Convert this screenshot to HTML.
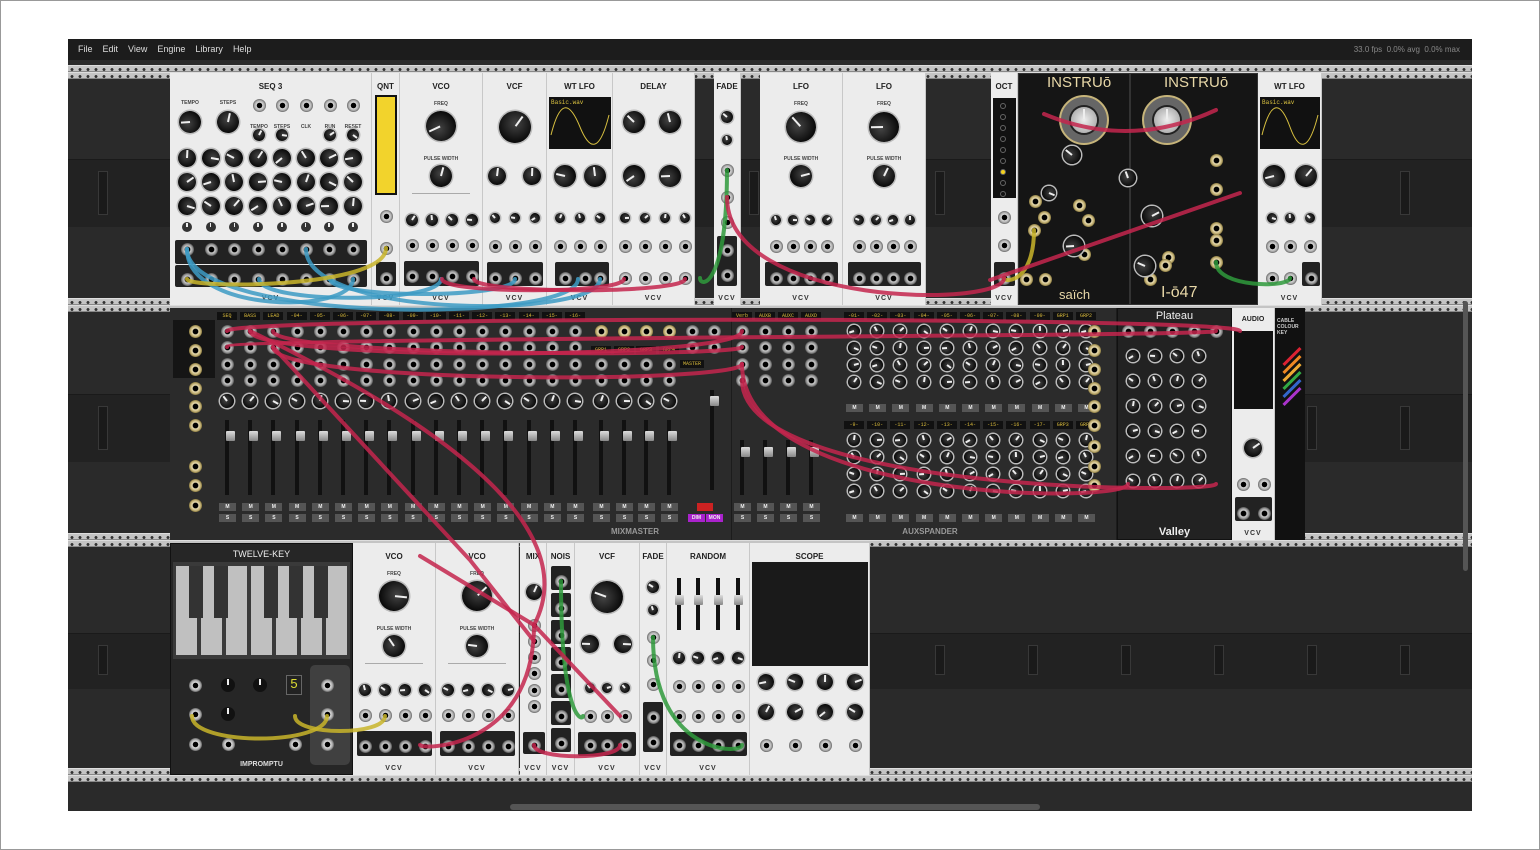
<!DOCTYPE html>
<html><head><meta charset="utf-8"><style>
*{margin:0;padding:0;box-sizing:border-box}
body{width:1540px;height:850px;background:#fff;position:relative;overflow:hidden;font-family:"Liberation Sans",sans-serif}
#frame{position:absolute;left:0;top:0;width:1540px;height:850px;border:1px solid #999}
#app{position:absolute;left:68px;top:39px;width:1404px;height:772px;background:#2a2a2a;overflow:hidden}
#menu{position:absolute;left:0;top:0;width:1404px;height:21px;background:#1c1c1c;color:#ddd;font-size:9px;line-height:21px}
#menu span{margin-left:10px}
#menu .r{position:absolute;right:12px;top:0;color:#888;font-size:8px}
.rail{position:absolute;left:0;width:1404px;height:7px;background:#c4c4c4;background-image:radial-gradient(circle,#333 1.3px,transparent 1.6px);background-size:8px 7px;border-top:1px solid #ddd;border-bottom:1px solid #888}
.band{position:absolute;left:0;width:1404px;background:#222;border-top:1px solid #1a1a1a}
.conn{position:absolute;width:10px;height:40px;background:#1a1a1a;border:1px solid #383838}
.p{position:absolute;overflow:hidden}
.w{background:#ececec;border-right:1px solid #c8c8c8}
.d{background:#2b2b2b;border-right:1px solid #1c1c1c}
.t{position:absolute;left:0;width:100%;text-align:center;font-weight:bold;font-size:8px;color:#222}
.l{position:absolute;font-size:5px;color:#444;font-weight:bold;transform:translateX(-50%);white-space:nowrap}
.dl{color:#bbb}
.k{position:absolute;border-radius:50%;background:radial-gradient(circle at 45% 40%,#444,#0c0c0c 70%);box-shadow:0 0 0 1.5px #bbb}
.k::after{content:"";position:absolute;left:50%;top:8%;width:1.5px;height:40%;background:#eee;margin-left:-.75px}
.j{position:absolute;width:13px;height:13px;border-radius:50%;background:radial-gradient(circle,#000 2.5px,#ddd 3px,#aaa 5px,#666 6.5px)}
.jd{background:radial-gradient(circle,#000 2.5px,#ccc 3.2px,#999 5px,#555 6.5px)}
.jg{background:radial-gradient(circle,#000 2.5px,#e8dcb0 3.2px,#c6b47a 5px,#8a7a40 6.5px)}
.ob{position:absolute;background:#222;border-radius:2px}
.vcv{position:absolute;bottom:3px;left:0;width:100%;text-align:center;font-size:7px;font-weight:bold;color:#333;letter-spacing:1px}
.lab{position:absolute;background:#111;color:#d8b93a;font-size:5px;font-family:"Liberation Mono",monospace;text-align:center;height:8px;line-height:8px;width:20px}
.fad{position:absolute;width:4px;height:75px;background:#111}
.cap{position:absolute;width:9px;height:10px;background:linear-gradient(#ddd,#888);border-radius:1px}
.btn{position:absolute;width:17px;height:8px;background:#555;color:#eee;font-size:5px;text-align:center;line-height:8px;font-weight:bold}
</style></head><body><div id="frame"></div>
<div id="app">
<div id="menu"><span>File</span><span>Edit</span><span>View</span><span>Engine</span><span>Library</span><span>Help</span><span class="r">33.0 fps &nbsp;0.0% avg &nbsp;0.0% max</span></div>
<div class="rail" style="top:26px"></div><div class="rail" style="top:33px"></div>
<div class="band" style="top:120px;height:68px"></div>
<div class="rail" style="top:259px"></div><div class="rail" style="top:266px"></div>
<div class="band" style="top:355px;height:68px"></div>
<div class="rail" style="top:494px"></div><div class="rail" style="top:501px"></div>
<div class="band" style="top:594px;height:56px"></div>
<div class="rail" style="top:729px"></div><div class="rail" style="top:736px"></div>
<div style="position:absolute;left:442px;top:765px;width:530px;height:6px;background:#555;border-radius:3px"></div>
<div style="position:absolute;left:1395px;top:262px;width:5px;height:270px;background:#555;border-radius:3px"></div>
<div id="mods"></div>
<svg id="cab" width="1404" height="772" style="position:absolute;left:0;top:0" fill="none" stroke-linecap="round"></svg>
</div>
<script>
var M=document.getElementById('mods');
function el(cls,x,y,w,h,st,html){var d=document.createElement('div');d.className=cls;d.style.left=x+'px';d.style.top=y+'px';if(w)d.style.width=w+'px';if(h)d.style.height=h+'px';if(st)d.style.cssText+=st;if(html)d.innerHTML=html;M.appendChild(d);return d}
var OX=68,OY=39;
[120,355,594].forEach(function(b){for(var x=0;x<1404;x+=93)el('conn',x+30,b+12,10,b==594?30:44);});
function P(x,y,w,h,c,title,vcv){el('p '+c,x-OX,y-OY,w,h,'',(title?'<div class="t" style="top:9px;'+(c=='d'?'color:#ddd':'')+'">'+title+'</div>':'')+(vcv?'<div class="vcv">VCV</div>':''))}
function K(x,y,r){el('k',x-OX-r,y-OY-r,2*r,2*r,'transform:rotate('+((x*37+y*13)%260-130)+'deg)')}
function J(x,y,t){el('j '+(t||''),x-OX-6,y-OY-6)}
function L(x,y,s,d){el('l'+(d?' dl':''),x-OX,y-OY,0,0,'',s)}
function OB(x,y,w,h){el('ob',x-OX,y-OY,w,h)}
P(170,73,202,232,'w','SEQ 3',1);
L(190,100,'TEMPO');L(228,100,'STEPS');K(190,122,11);K(228,122,11);
[259,282,306,330,353].forEach(function(x,i){J(x,105);L(x,124,['TEMPO','STEPS','CLK','RUN','RESET'][i]);});
K(259,135,6);K(282,135,6);K(330,135,6);K(353,135,6);
for(var r=0;r<3;r++)for(var q=0;q<8;q++)K(187+q*23.7,158+r*24,9);
for(var q=0;q<8;q++){el('k',187+q*23.7-OX-5,227-OY-5,10,10,'box-shadow:none;background:#333');}
OB(175,240,192,24);for(var q=0;q<8;q++)J(187+q*23.7,249,'jd');
OB(175,265,192,22);for(var q=0;q<8;q++)J(187+q*23.7,279,'jd');
P(372,73,28,232,'w','QNT',1);el('p',375-OX,95-OY,22,100,'background:#f2d32c;border:2px solid #111');
J(386,216);J(386,248);OB(376,262,20,24);J(386,278,'jd');
function vco(x,y){P(x,y,83,232,'w','VCO',1);L(x+41,y+28,'FREQ');K(x+41,y+53,15);L(x+41,y+83,'PULSE WIDTH');K(x+41,y+103,11);
el('p',x+12-OX,y+120-OY,58,1,'background:#aaa');[10,30,50,70].forEach(function(d){K(x+d+2,y+147,6);J(x+d+2,y+172);});OB(x+4,y+188,75,25);[10,30,50,70].forEach(function(d){J(x+d+2,y+203,'jd')});}
vco(400,73);
function vcf(x,y,w,t){P(x,y,w,232,'w',t,1);}
vcf(483,73,64,'VCF');K(515,127,16);K(497,176,9);K(532,176,9);[495,515,535].forEach(function(a){K(a,218,5);J(a,246);});OB(487,262,56,24);[495,515,535].forEach(function(a){J(a,278,'jd')});
vcf(547,73,66,'WT LFO');el('p',549-OX,97-OY,62,52,'background:#111','<div style="color:#d8c040;font:6px Liberation Mono;padding:2px">Basic.wav</div><svg width="62" height="44" style="position:absolute;top:8px"><path d="M2 30 C12 -10 22 0 31 22 S50 50 60 10" stroke="#d8c040" fill="none"/></svg>');K(565,176,11);K(595,176,11);[560,580,600].forEach(function(a){K(a,218,5);J(a,246);});OB(555,262,54,24);[565,585,600].forEach(function(a){J(a,278,'jd')});
vcf(613,73,82,'DELAY');K(634,122,11);K(670,122,11);K(634,176,11);K(670,176,11);[625,645,665,685].forEach(function(a){K(a,218,5);J(a,246);J(a,278);});
P(714,73,27,232,'w','FADE',1);K(727,117,6);K(727,140,5);J(727,170);J(727,197);J(727,222);OB(717,236,20,50);J(727,250,'jd');J(727,275,'jd');
function lfo(x){P(x,73,83,232,'w','LFO',1);L(x+41,101,'FREQ');K(x+41,127,15);L(x+41,156,'PULSE WIDTH');K(x+41,176,11);[16,33,50,67].forEach(function(d){K(x+d,220,5);J(x+d,246);});OB(x+5,262,73,24);[16,33,50,67].forEach(function(d){J(x+d,278,'jd')});}
lfo(760);lfo(843);
P(991,73,27,232,'w','OCT',1);el('p',993-OX,98-OY,23,100,'background:#111');for(var i=0;i<9;i++)el('p',1000-OX,103+i*11-OY,6,6,'border-radius:50%;border:1px solid #666;'+(i==6?'background:#f5d21e':''));J(1004,217);J(1004,245);OB(994,262,21,24);J(1004,278,'jd');
el('p',1018-OX,73-OY,112,232,'background:#151515;border:1px solid #333','<div style="position:absolute;top:0;left:28px;color:#e8d8a8;font-size:15px">INSTRUō</div><div style="position:absolute;bottom:2px;left:40px;color:#e8d8a8;font-size:13px">saïch</div>');
el('p',1130-OX,73-OY,128,232,'background:#151515;border:1px solid #333','<div style="position:absolute;top:0;left:33px;color:#e8d8a8;font-size:15px">INSTRUō</div><div style="position:absolute;bottom:2px;left:30px;color:#e8d8a8;font-size:16px">I-ō47</div>');
function big(x,y){el('p',x-OX-25,y-OY-25,50,50,'border-radius:50%;background:#666;border:2px solid #c6b47a');el('k',x-OX-13,y-OY-13,26,26,'background:radial-gradient(circle,#eee,#999);box-shadow:0 0 0 2px #222');}
big(1084,120);big(1167,120);
[[1035,201],[1044,217],[1034,230],[1079,205],[1084,254],[1168,257],[1216,160],[1216,189],[1216,228],[1216,240],[1216,262],[1088,220],[1045,279],[1026,279],[1150,279],[1165,265]].forEach(function(p){J(p[0],p[1],'jg')});
K(1074,246,10);K(1152,216,10);K(1145,266,10);K(1128,178,8);K(1049,193,7);K(1072,155,9);
P(1258,73,64,232,'w','WT LFO',1);el('p',1260-OX,97-OY,60,52,'background:#111','<div style="color:#d8c040;font:6px Liberation Mono;padding:2px">Basic.wav</div><svg width="60" height="44" style="position:absolute;top:8px"><path d="M2 30 C12 -10 22 0 30 22 S48 50 58 10" stroke="#d8c040" fill="none"/></svg>');K(1274,176,11);K(1306,176,11);[1272,1290,1310].forEach(function(a){K(a,218,5);J(a,246);});OB(1302,262,18,24);J(1272,278);J(1290,278);J(1311,278,'jd');
P(170,308,562,232,'d','',0);P(732,308,385,232,'d','',0);
el('p',1117-OX,308-OY,115,232,'background:#222;border:1px solid #111','<div style="position:absolute;top:1px;width:100%;text-align:center;color:#eee;font-size:11px">Plateau</div><div style="position:absolute;bottom:1px;width:100%;text-align:center;color:#eee;font-size:11px;font-weight:bold">Valley</div>');
P(1232,308,43,232,'w','',1);el('l',1253-OX,316-OY,0,0,'font-size:7px;color:#222','AUDIO');el('p',1234-OX,331-OY,39,78,'background:#111');K(1253,448,9);J(1243,484);J(1264,484);OB(1235,497,37,24);J(1243,513,'jd');J(1264,513,'jd');
el('p',1275-OX,308-OY,30,232,'background:#111','<div style="color:#ccc;font-size:5px;font-weight:bold;padding:10px 2px">CABLE COLOUR KEY</div>');
['#d23','#e82','#ea3','#3a4','#36c','#a3c'].forEach(function(cc,i){el('p',1280-OX,355+i*8-OY,24,3,'background:'+cc+';transform:rotate(-45deg)')});
var names=['SEQ','BASS','LEAD','-04-','-05-','-06-','-07-','-08-','-09-','-10-','-11-','-12-','-13-','-14-','-15-','-16-'];
for(var q=0;q<16;q++){var x=227+q*23.2;el('lab',x-OX-10,312-OY,20,0,'',names[q]);[331,347,364,380].forEach(function(y){J(x,y,'jd')});K(x,401,7);el('fad',x-OX-2,420-OY);el('cap',x-OX-1,431-OY);el('btn',x-OX-8,503-OY,0,0,'','M');el('btn',x-OX-8,514-OY,0,0,'','S');}
el('p',173-OX,320-OY,42,58,'background:#151515');
[331,350,369,388,406,425,466,485,505].forEach(function(y){J(195,y,'jg')});
[601,624,646,669].forEach(function(x,i){J(x,331,'jg');el('lab',x-OX-10,346-OY,20,0,'',['GRP1','GRP2','GRP3','GRP4'][i]);J(x,364,'jd');J(x,380,'jd');K(x,401,7);el('fad',x-OX-2,420-OY);el('cap',x-OX-1,431-OY);el('btn',x-OX-8,503-OY,0,0,'','M');el('btn',x-OX-8,514-OY,0,0,'','S');});
J(692,331,'jd');J(692,347,'jd');J(714,331,'jd');J(714,347,'jd');el('lab',692-OX-12,360-OY,24,0,'','MASTER');el('fad',712-OX-2,390-OY,0,100);el('cap',710-OX,396-OY);el('btn',697-OX,503-OY,16,0,'background:#c22');el('btn',688-OX,514-OY,0,0,'background:#a2c','DIM');el('btn',706-OX,514-OY,0,0,'background:#a2c','MON');
el('l',635-OX,527-OY,0,0,'font-size:8px;color:#999','MIXMASTER');el('l',930-OX,527-OY,0,0,'font-size:8px;color:#999','AUXSPANDER');
['Verb','AUXB','AUXC','AUXD'].forEach(function(n,i){var x=742+i*23;el('lab',x-OX-10,312-OY,20,0,'',n);[331,347,364,380].forEach(function(y){J(x,y,'jd')});el('fad',x-OX-2,440-OY,0,55);el('cap',x-OX-1,447-OY);el('btn',x-OX-8,503-OY,0,0,'','M');el('btn',x-OX-8,514-OY,0,0,'','S');});
for(var q=0;q<11;q++){var x=854+q*23.2;el('lab',x-OX-10,312-OY,20,0,'',q<9?'-0'+(q+1)+'-':'GRP'+(q-8));el('lab',x-OX-10,421-OY,20,0,'',q<9?'-'+(q+9)+'-':'GRP'+(q-6));for(var r=0;r<4;r++){K(x,331+r*17,6);K(x,440+r*17,6);}el('btn',x-OX-8,404-OY,0,0,'','M');el('btn',x-OX-8,514-OY,0,0,'','M');}
[331,350,369,388,406,425,446,466,485].forEach(function(y){J(1094,y,'jg')});
for(var r=0;r<6;r++)for(var q=0;q<4;q++)K(1133+q*22,356+r*25,6);
[1128,1150,1172,1194,1216].forEach(function(x){J(x,331,'jd')});
el('p',170-OX,543-OY,183,232,'background:#262626;border:1px solid #111','<div style="position:absolute;top:5px;width:100%;text-align:center;color:#eee;font-size:9px">TWELVE-KEY</div><div style="position:absolute;bottom:6px;width:100%;text-align:center;color:#ddd;font-size:7px;font-weight:bold">IMPROMPTU</div>');
el('p',173-OX,562-OY,177,97,'background:#3a3a3a');
for(var i=0;i<7;i++)el('p',176+i*25-OX,566-OY,21,89,'background:#c0c0c0');
[0,1,3,4,5].forEach(function(i){el('p',189+i*25-OX,566-OY,14,52,'background:#333')});
el('p',310-OX,665-OY,40,100,'background:#404040;border-radius:5px');
[[195,685],[195,714],[195,744],[228,744],[295,685],[327,744],[295,744],[327,685],[327,714]].forEach(function(p){J(p[0],p[1])});
el('k',221-OX,678-OY,14,14,'box-shadow:none;background:#111');el('k',253-OX,678-OY,14,14,'box-shadow:none;background:#111');el('k',221-OX,707-OY,14,14,'box-shadow:none;background:#111');
el('p',286-OX,675-OY,16,20,'background:#222;border:1px solid #666;color:#dd3;font-size:13px;text-align:center','5');
vco(353,543);vco(436,543);
P(520,543,27,232,'w','MIX',1);K(534,592,8);[625,641,657,673,690,706].forEach(function(y){J(534,y)});OB(523,732,22,22);J(534,745,'jd');
P(547,543,28,232,'w','NOIS',1);for(var i=0;i<7;i++){OB(551,566+i*27,20,24);J(561,581+i*27,'jd');}
vcf(575,543,65,'VCF');K(607,597,16);K(590,644,9);K(623,644,9);[590,607,625].forEach(function(a){K(a,688,5);J(a,716);});OB(578,732,58,24);[590,607,625].forEach(function(a){J(a,745,'jd')});
P(640,543,27,232,'w','FADE',1);K(653,587,6);K(653,610,5);J(653,637);J(653,660);J(653,684);OB(643,702,20,50);J(653,717,'jd');J(653,742,'jd');
P(667,543,83,232,'w','RANDOM',1);[679,698,718,738].forEach(function(x){el('p',x-OX-2,578-OY,4,52,'background:#111');el('cap',x-OX-4,595-OY);K(x,658,6);J(x,686);J(x,716);});OB(670,732,77,24);[679,698,718,738].forEach(function(x){J(x,745,'jd')});
P(750,543,120,232,'w','SCOPE',0);el('p',752-OX,562-OY,116,104,'background:#1a1a1a');[766,795,825,855].forEach(function(x){K(x,682,8);K(x,712,8);J(x,745);});
var S=document.getElementById('cab');
function C(d,col){var p=document.createElementNS('http://www.w3.org/2000/svg','path');p.setAttribute('d',d);p.setAttribute('stroke',col);p.setAttribute('stroke-width','4');p.setAttribute('stroke-opacity','0.85');S.appendChild(p);}
var R='#c4264d',B='#3d9bc4',Y='#c9b52a',G='#2f9a3c';
function cb(x1,y1,x2,y2,col,sag){x1-=OX;x2-=OX;y1-=OY;y2-=OY;var my=Math.max(y1,y2)+(sag||30);C('M'+x1+' '+y1+' C'+x1+' '+my+' '+x2+' '+my+' '+x2+' '+y2,col);}
cb(187,249,353,279,B,35);cb(187,249,578,279,B,45);cb(259,279,441,279,B,25);cb(330,279,515,279,B,20);cb(306,249,600,279,B,40);
cb(187,279,386,248,Y,10);cb(1004,278,1034,230,Y,5);cb(295,716,385,716,Y,20);cb(192,716,327,716,Y,30);
cb(727,170,700,278,G,10);cb(1216,262,1290,278,G,10);cb(561,581,583,716,G,5);cb(653,637,742,745,G,10);
cb(442,279,624,279,R,15);cb(474,279,685,279,R,15);cb(727,197,1004,278,R,30);
cb(227,331,1240,331,R,-15);cb(227,347,1216,331,R,-10);cb(250,331,742,331,R,0);cb(273,331,742,347,R,10);cb(273,347,742,364,R,20);cb(742,380,1216,484,R,10);cb(742,364,1128,484,R,20);
C('M'+(250-OX)+' '+(331-OY)+' Q'+(600-OX)+' '+(500-OY)+' '+(534-OX)+' '+(625-OY),R);
C('M'+(273-OX)+' '+(347-OY)+' L'+(470-OX)+' '+(560-OY)+' L'+(534-OX)+' '+(641-OY),R);
C('M'+(420-OX)+' '+(556-OY)+' L'+(534-OX)+' '+(625-OY)+' L'+(620-OX)+' '+(716-OY),R);
C('M'+(1044-OX)+' '+(114-OY)+' Q'+(1130-OX)+' '+(150-OY)+' '+(1216-OX)+' '+(110-OY),R);
C('M'+(990-OX)+' '+(280-OY)+' L'+(1240-OX)+' '+(193-OY),R);
cb(534,625,420,745,R,5);cb(534,745,620,745,R,15);
</script>
</body></html>
